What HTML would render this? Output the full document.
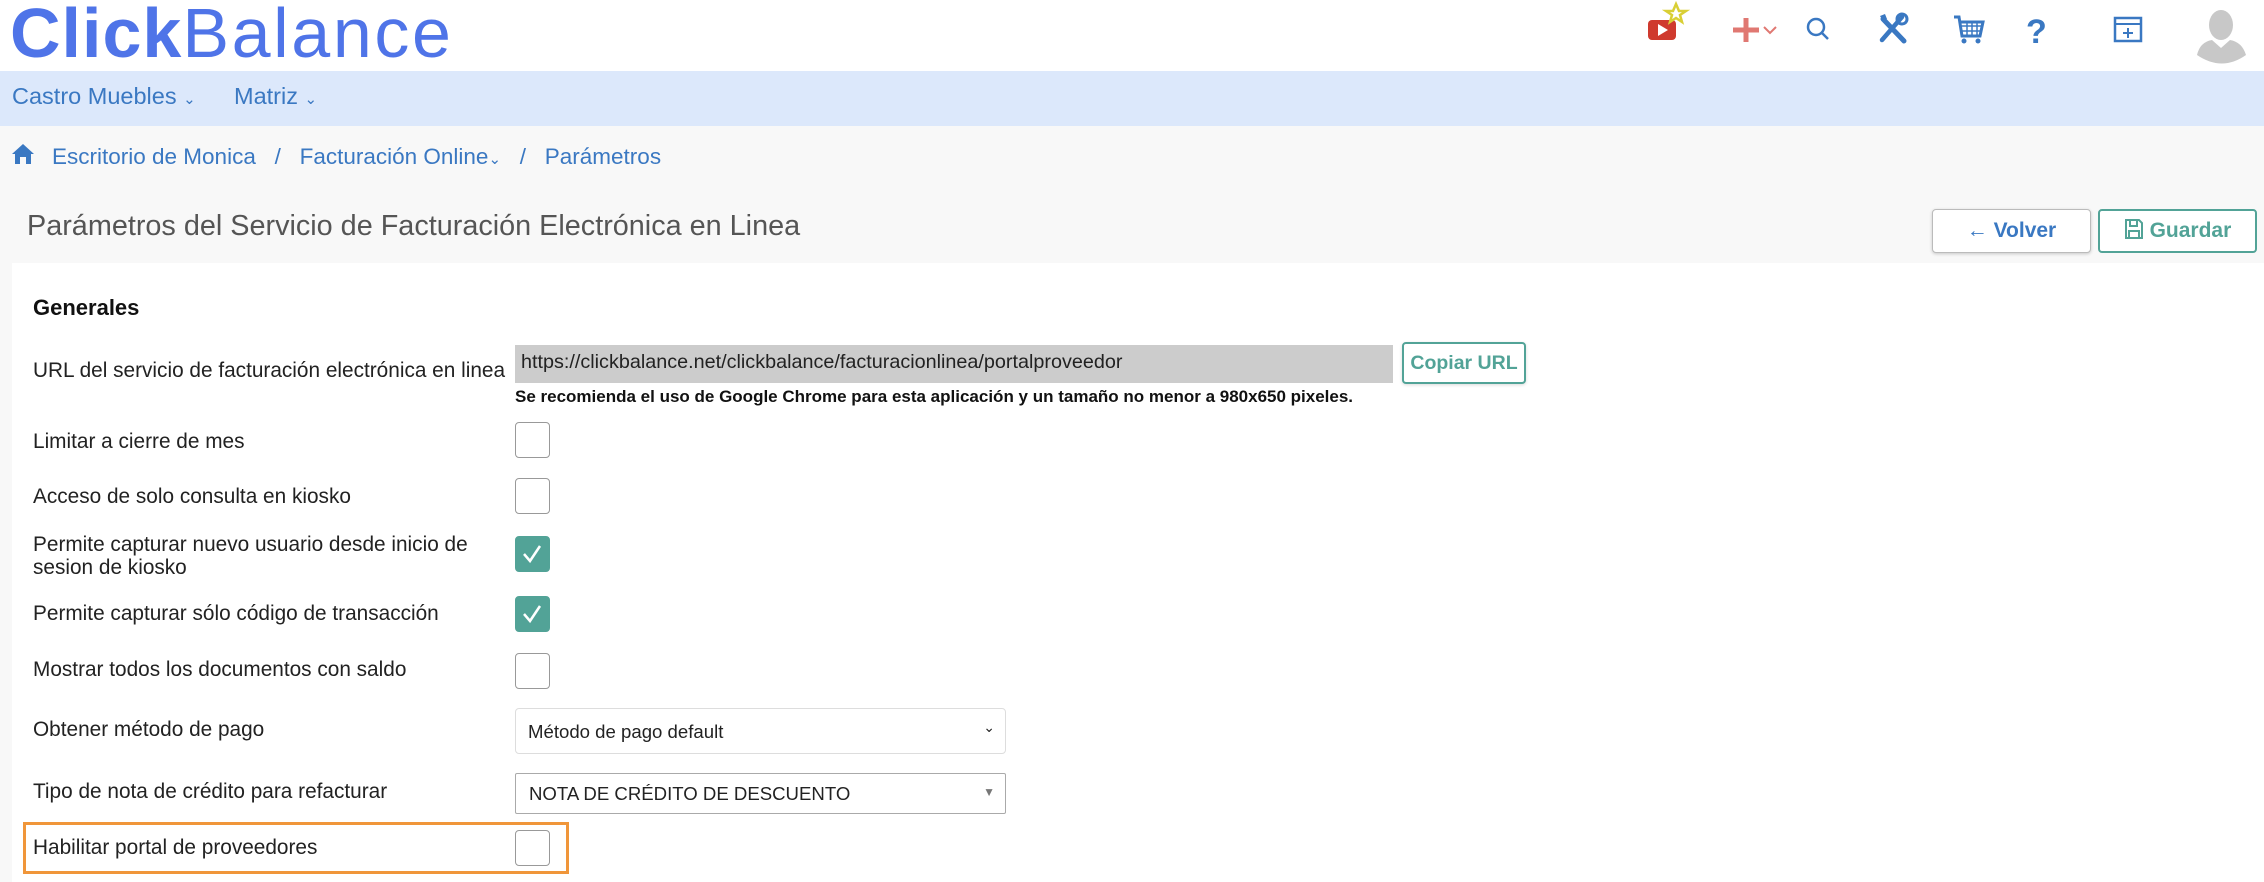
<!DOCTYPE html>
<html><head><meta charset="utf-8"><style>
*{margin:0;padding:0;box-sizing:border-box}
body{width:2264px;height:882px;overflow:hidden;background:#f8f8f8;font-family:"Liberation Sans",Arial,sans-serif;position:relative}
.a{position:absolute;white-space:nowrap}
.lbl{position:absolute;left:33px;font-size:20.8px;color:#222;white-space:nowrap}
.cb{position:absolute;left:515px;width:35px;height:36px;border:1.5px solid #999;border-radius:4px;background:#fff}
.ck{background:#52a397;border-color:#52a397}
.nav{color:#3a78c2;font-size:22.5px}
</style></head><body>
<div class="a" style="left:0;top:0;width:2264px;height:71px;background:#fff"></div>
<div class="a" style="left:10px;top:-7px;font-size:70px;color:#4f74e8;letter-spacing:2.6px"><b style="letter-spacing:1px">Click</b>Balance</div>
<div class="a" style="left:0;top:71px;width:2264px;height:55px;background:#dce8fb"></div>
<div class="a nav" style="left:12px;top:83px;font-size:23.5px">Castro Muebles <span style="font-size:15px">&#8964;</span></div>
<div class="a nav" style="left:234px;top:83px;font-size:23.5px">Matriz <span style="font-size:15px">&#8964;</span></div>

<svg class="a" style="left:1640px;top:0" width="620" height="70" viewBox="1640 0 620 70">
<rect x="1648" y="20" width="28" height="20" rx="4" fill="#cf3a2e"/><path d="M1658 24 L1668 30 L1658 36Z" fill="#fff"/>
<path d="M1676 4 L1679 11 L1686 11 L1680 15 L1682 22 L1676 18 L1670 22 L1672 15 L1666 11 L1673 11Z" fill="none" stroke="#d9cf35" stroke-width="2.5"/>
<path d="M1746 18 V42 M1733 30 H1759" stroke="#e07872" stroke-width="5"/>
<path d="M1764 27 L1770 33 L1776 27" fill="none" stroke="#e07872" stroke-width="2"/>
<circle cx="1816" cy="27" r="8" fill="none" stroke="#3a78c2" stroke-width="2.5"/><path d="M1822 33 L1828 39" stroke="#3a78c2" stroke-width="2.5"/>
<path d="M1883 19 L1904 41" stroke="#3a78c2" stroke-width="5" stroke-linecap="round"/>
<path d="M1880 16 L1885 14 L1887 19 L1883 21Z" fill="#3a78c2"/>
<path d="M1902 17 L1882 40" stroke="#3a78c2" stroke-width="4.5" stroke-linecap="round"/>
<circle cx="1902" cy="19" r="5" fill="none" stroke="#3a78c2" stroke-width="3"/>
<path d="M1954 17 H1959 L1962 36 H1980 L1983 22 H1961" fill="none" stroke="#3a78c2" stroke-width="3"/>
<path d="M1961 26 H1982 M1962 31 H1981 M1967 22 V36 M1972 22 V36 M1977 22 V36" stroke="#3a78c2" stroke-width="1.5"/>
<circle cx="1964" cy="41" r="2.5" fill="#3a78c2"/><circle cx="1978" cy="41" r="2.5" fill="#3a78c2"/>
<text x="2026" y="43" font-family="Liberation Sans" font-weight="bold" font-size="34" fill="#3a78c2">?</text>
<rect x="2115" y="18" width="26" height="23" fill="none" stroke="#3a78c2" stroke-width="2.5"/><path d="M2115 24 H2141 M2128 28 V38 M2123 33 H2133" stroke="#3a78c2" stroke-width="2"/>
<ellipse cx="2221" cy="25" rx="12" ry="15" fill="#c8c8c8"/><path d="M2197 55 Q2200 42 2212 40 L2221 48 L2230 40 Q2242 42 2246 55 Q2222 72 2197 55Z" fill="#c8c8c8"/>
</svg>

<svg class="a" style="left:12px;top:143px" width="22" height="22" viewBox="0 0 22 22"><path d="M11 1 L22 11 H19 V21 H14 V14 H8 V21 H3 V11 H0Z" fill="#3a78c2"/></svg>
<div class="a nav" style="left:52px;top:144px">Escritorio de Monica &nbsp;&nbsp;/&nbsp;&nbsp; Facturación Online<span style="font-size:15px">&#8964;</span> &nbsp;&nbsp;/&nbsp;&nbsp; Parámetros</div>

<div class="a" style="left:27px;top:210px;font-size:28.8px;color:#555">Parámetros del Servicio de Facturación Electrónica en Linea</div>
<div class="a" style="left:1932px;top:209px;width:159px;height:44px;border:1.5px solid #bbb;border-radius:4px;background:#fff;box-shadow:0 1px 3px rgba(0,0,0,.2);color:#3a78c2;font-weight:bold;font-size:21px;text-align:center;line-height:41px">&#8592; Volver</div>
<div class="a" style="left:2098px;top:209px;width:159px;height:44px;border:2px solid #52a397;border-radius:4px;background:#fff;color:#52a397;font-weight:bold;font-size:21px;text-align:center;line-height:40px"><svg width="20" height="22" viewBox="0 0 20 22" style="vertical-align:-3px"><path d="M2 2 H15 L18 5 V20 H2Z M6 2 V8 H13 V2 M5 20 V13 H15 V20" fill="none" stroke="#52a397" stroke-width="2"/></svg> Guardar</div>

<div class="a" style="left:12px;top:263px;width:2252px;height:619px;background:#fff"></div>
<div class="a" style="left:33px;top:295px;font-size:22px;font-weight:bold;color:#111">Generales</div>

<div class="lbl" style="top:359px">URL del servicio de facturación electrónica en linea</div>
<div class="a" style="left:515px;top:345px;width:878px;height:38px;background:#ccc;font-size:19.8px;color:#222;padding:6px 6px;">https://clickbalance.net/clickbalance/facturacionlinea/portalproveedor</div>
<div class="a" style="left:1402px;top:342px;width:124px;height:42px;border:2px solid #52a397;border-radius:4px;background:#fff;color:#52a397;font-weight:bold;font-size:19.5px;text-align:center;line-height:38px;box-shadow:0 1px 3px rgba(0,0,0,.15)">Copiar URL</div>
<div class="a" style="left:515px;top:387px;font-size:17px;font-weight:bold;color:#111">Se recomienda el uso de Google Chrome para esta aplicación y un tamaño no menor a 980x650 pixeles.</div>

<div class="lbl" style="top:430px">Limitar a cierre de mes</div><div class="cb" style="top:422px"></div>
<div class="lbl" style="top:485px">Acceso de solo consulta en kiosko</div><div class="cb" style="top:478px"></div>
<div class="lbl" style="top:533px;line-height:23px">Permite capturar nuevo usuario desde inicio de<br>sesion de kiosko</div>
<div class="cb ck" style="top:536px"><svg width="32" height="33" viewBox="0 0 32 33"><path d="M8 17 L14 24 L24 9" fill="none" stroke="#fff" stroke-width="2.5"/></svg></div>
<div class="lbl" style="top:602px">Permite capturar sólo código de transacción</div>
<div class="cb ck" style="top:596px"><svg width="32" height="33" viewBox="0 0 32 33"><path d="M8 17 L14 24 L24 9" fill="none" stroke="#fff" stroke-width="2.5"/></svg></div>
<div class="lbl" style="top:658px">Mostrar todos los documentos con saldo</div><div class="cb" style="top:653px"></div>
<div class="lbl" style="top:718px">Obtener método de pago</div>
<div class="a" style="left:515px;top:708px;width:491px;height:46px;border:1.5px solid #ddd;border-radius:4px;background:#fff;font-size:18.6px;color:#222;padding:12px 12px">Método de pago default<span style="position:absolute;right:10px;top:10px;font-size:14px">&#8964;</span></div>
<div class="lbl" style="top:780px">Tipo de nota de crédito para refacturar</div>
<div class="a" style="left:515px;top:773px;width:491px;height:41px;border:1.5px solid #aaa;border-radius:2px;background:#fff;font-size:18.6px;color:#222;padding:9px 13px">NOTA DE CRÉDITO DE DESCUENTO<span style="position:absolute;right:10px;top:11px;font-size:12px;color:#777">&#9660;</span></div>
<div class="a" style="left:23px;top:822px;width:546px;height:52px;border:3px solid #f0963a"></div>
<div class="lbl" style="top:836px">Habilitar portal de proveedores</div><div class="cb" style="top:830px"></div>
</body></html>
